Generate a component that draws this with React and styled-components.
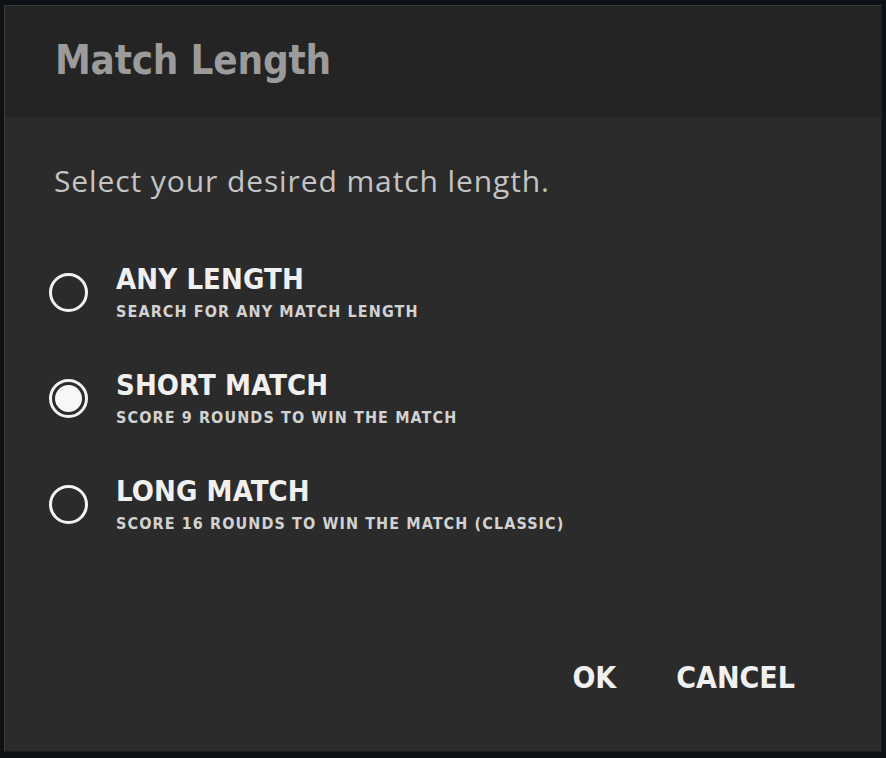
import React, { useState } from 'react'
import styled, { createGlobalStyle } from 'styled-components'

const GlobalStyle = createGlobalStyle`
  html, body {
    margin: 0;
    padding: 0;
    background: #0e1116;
  }
`

const options = [
  { id: 'any', title: 'ANY LENGTH', desc: 'SEARCH FOR ANY MATCH LENGTH' },
  { id: 'short', title: 'SHORT MATCH', desc: 'SCORE 9 ROUNDS TO WIN THE MATCH' },
  { id: 'long', title: 'LONG MATCH', desc: 'SCORE 16 ROUNDS TO WIN THE MATCH (CLASSIC)' },
]

export default function App() {
  const [selected, setSelected] = useState('short')
  return (
    <>
      <GlobalStyle />
      <Page>
        <Dialog>
          <Header>
            <Title>Match Length</Title>
          </Header>
          <Body>
            <Prompt>Select your desired match length.</Prompt>
            <OptionList>
              {options.map(o => (
                <Option key={o.id} onClick={() => setSelected(o.id)}>
                  <Radio checked={selected === o.id} />
                  <OptionText>
                    <OptionTitle>{o.title}</OptionTitle>
                    <OptionDesc>{o.desc}</OptionDesc>
                  </OptionText>
                </Option>
              ))}
            </OptionList>
            <Footer>
              <ActionButton>OK</ActionButton>
              <ActionButton>CANCEL</ActionButton>
            </Footer>
          </Body>
        </Dialog>
      </Page>
    </>
  )
}

const Page = styled.div`
  width: 886px;
  height: 758px;
  padding: 5px 4px 6px 4px;
  box-sizing: border-box;
  display: flex;
`

const Dialog = styled.div`
  flex: 1;
  display: flex;
  flex-direction: column;
  background: #2b2b2b;
  border: 1px solid #3a3a3d;
  border-right-color: #1c1c1e;
  border-bottom-color: #1c1c1e;
`

const Header = styled.div`
  height: 111px;
  background: #242424;
  display: flex;
  align-items: center;
  padding-left: 50px;
  padding-bottom: 4px;
  box-sizing: border-box;
`

const Title = styled.h1`
  margin: 0;
  font-family: 'DejaVu Sans Condensed', 'DejaVu Sans', sans-serif;
  font-weight: bold;
  font-size: 40px;
  color: #9b9b9b;
  letter-spacing: -0.2px;
`

const Body = styled.div`
  flex: 1;
  display: flex;
  flex-direction: column;
  padding: 43px 0 0 44px;
`

const Prompt = styled.p`
  margin: 0 0 0 5px;
  font-family: 'Open Sans', 'Noto Sans', sans-serif;
  font-size: 30px;
  color: #c4c4c4;
  letter-spacing: 0.9px;
`

const OptionList = styled.div`
  display: flex;
  flex-direction: column;
  gap: 46px;
  margin-top: 61px;
`

const Option = styled.div`
  display: flex;
  align-items: center;
  gap: 28px;
  cursor: pointer;
`

const Radio = styled.span`
  width: 39px;
  height: 39px;
  box-sizing: border-box;
  border-radius: 50%;
  border: 3px solid #f2f2f2;
  position: relative;
  flex-shrink: 0;
  &::after {
    content: '';
    position: absolute;
    inset: 3px;
    border-radius: 50%;
    background: #f7f7f7;
    display: ${p => (p.checked ? 'block' : 'none')};
  }
`

const OptionText = styled.div`
  display: flex;
  flex-direction: column;
  gap: 6px;
`

const OptionTitle = styled.div`
  font-family: 'DejaVu Sans Condensed', 'DejaVu Sans', sans-serif;
  font-weight: bold;
  font-size: 29px;
  line-height: 34px;
  color: #f0f0f0;
  letter-spacing: 0.1px;
`

const OptionDesc = styled.div`
  font-family: 'DejaVu Sans Condensed', 'DejaVu Sans', sans-serif;
  font-weight: bold;
  font-size: 16px;
  line-height: 20px;
  color: #d2d2d2;
  letter-spacing: 1.1px;
`

const Footer = styled.div`
  margin-top: auto;
  margin-bottom: 56px;
  display: flex;
  justify-content: flex-end;
  gap: 60px;
  padding-right: 86px;
`

const ActionButton = styled.button`
  background: none;
  border: none;
  padding: 0;
  font-family: 'DejaVu Sans Condensed', 'DejaVu Sans', sans-serif;
  font-weight: bold;
  font-size: 30px;
  color: #f0f0f0;
  letter-spacing: 0;
  cursor: pointer;
`
